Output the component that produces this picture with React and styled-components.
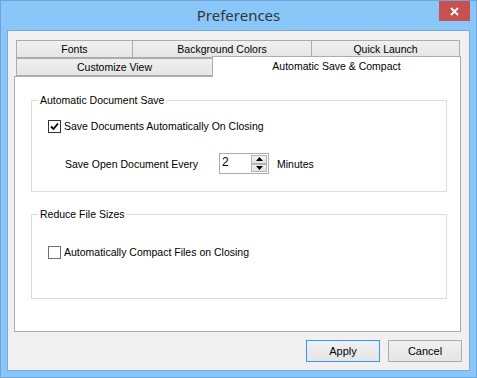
import React from 'react';
import styled, { createGlobalStyle } from 'styled-components';

const GlobalStyle = createGlobalStyle`
    html, body {
        margin: 0;
        padding: 0;
        background: #ffffff;
    }
    * {
        box-sizing: border-box;
    }
`;

const Frame = styled.div`
    width: 477px;
    height: 378px;
    border: 1px solid #6aa6dc;
    background: #8ac6f8;
    padding: 0 6px 6px;
    display: flex;
    flex-direction: column;
    font-family: "Liberation Sans", Arial, sans-serif;
    font-size: 10.5px;
    color: #000;
`;

const TitleBar = styled.div`
    position: relative;
    height: 29px;
    display: flex;
    align-items: center;
    justify-content: center;
    font-family: "Noto Sans", "Open Sans", sans-serif;
    font-size: 15px;
    color: #2f3640;
    padding-bottom: 1px;
`;

const CloseBtn = styled.div`
    position: absolute;
    top: 0;
    right: 0;
    width: 31px;
    height: 20px;
    background: #c75050;
    display: flex;
    align-items: center;
    justify-content: center;
`;

const Client = styled.div`
    flex: 1;
    border: 1px solid #74acdf;
    background: #f0f0f0;
    padding: 9px 0 8px 6px;
    display: flex;
    flex-direction: column;
`;

const TabControl = styled.div`
    width: 447px;
    flex: 1;
    display: flex;
    flex-direction: column;
`;

const TabRow = styled.div`
    height: 18px;
    display: flex;
    align-items: flex-end;
    padding-left: 2px;
`;

const Tab = styled.div`
    width: ${({w}) => w}px;
    height: ${({active}) => active ? 21 : 18}px;
    margin-left: -1px;
    margin-bottom: ${({active}) => active ? -1 : 0}px;
    &:first-child {
        margin-left: 0;
    }
    border: 1px solid #acacac;
    border-bottom: ${({active}) => active ? 'none' : '1px solid #acacac'};
    background: ${({active}) => active ? '#ffffff' : 'linear-gradient(#f0f0f0, #e5e5e5)'};
    position: relative;
    z-index: ${({active}) => active ? 1 : 0};
    display: flex;
    align-items: ${({active}) => active ? 'flex-start' : 'center'};
    padding-top: ${({active}) => active ? 2 : 0}px;
    justify-content: center;
    line-height: 14px;
    white-space: nowrap;
`;

const Panel = styled.div`
    flex: 1;
    border: 1px solid #acacac;
    background: #ffffff;
    padding: 23px 13px 0 16px;
    display: flex;
    flex-direction: column;
    gap: 22px;
`;

const Group = styled.div`
    position: relative;
    height: ${({h}) => h}px;
    border: 1px solid #dcdcdc;
    padding: ${({top}) => top}px 0 0 16px;
    display: flex;
    flex-direction: column;
    gap: 20px;
`;

const Legend = styled.div`
    position: absolute;
    top: -7px;
    left: 6px;
    padding: 0 2px;
    background: #ffffff;
    line-height: 13px;
`;

const CheckRow = styled.label`
    display: flex;
    align-items: center;
    gap: 3px;
    height: 13px;
    line-height: 13px;
`;

const Box = styled.span`
    width: 13px;
    height: 13px;
    border: 1px solid ${({checked}) => checked ? '#333333' : '#707070'};
    background: #ffffff;
    display: flex;
    align-items: center;
    justify-content: center;
`;

const SpinRow = styled.div`
    display: flex;
    align-items: center;
    height: 21px;
    padding-left: 17px;
`;

const SpinLabel = styled.span`
    width: 154px;
`;

const SpinBox = styled.div`
    width: 50px;
    height: 21px;
    border: 1px solid #abadb3;
    background: #ffffff;
    display: flex;
    align-items: stretch;
    padding: 0 1px 0 0;
`;

const SpinValue = styled.span`
    flex: 1;
    padding-left: 2px;
    font-size: 12px;
    line-height: 16px;
`;

const SpinButtons = styled.div`
    width: 16px;
    display: flex;
    flex-direction: column;
    padding: 1px 0;
`;

const SpinBtn = styled.div`
    flex: 1;
    border: 1px solid #b4b4b4;
    background: linear-gradient(#f2f2f2, #e2e2e2);
    display: flex;
    align-items: center;
    justify-content: center;
`;

const Unit = styled.span`
    margin-left: 8px;
`;

const ButtonBar = styled.div`
    margin-top: 8px;
    padding-right: 7px;
    display: flex;
    justify-content: flex-end;
    gap: 8px;
`;

const Button = styled.div`
    width: 74px;
    height: 22px;
    border: 1px solid ${({primary}) => primary ? '#3399ff' : '#acacac'};
    background: linear-gradient(#f0f0f0, #e5e5e5);
    display: flex;
    align-items: center;
    justify-content: center;
    font-size: 11px;
`;

const Arrow = ({up}) => (
    <svg width="7" height="4" viewBox="0 0 7 4">
        <polygon points={up ? '0,4 7,4 3.5,0' : '0,0 7,0 3.5,4'} fill="#000" />
    </svg>
);

const CheckBox = ({checked, children}) => (
    <CheckRow>
        <Box checked={checked}>
            {checked && (
                <svg width="9" height="9" viewBox="0 0 9 9">
                    <path d="M1 4.5 L3.5 7 L8 1.5" stroke="#000" strokeWidth="1.8" fill="none" />
                </svg>
            )}
        </Box>
        {children}
    </CheckRow>
);

export default function App() {
    return (
        <>
            <GlobalStyle />
            <Frame>
                <TitleBar>
                    Preferences
                    <CloseBtn>
                        <svg width="9" height="9" viewBox="0 0 9 9">
                            <path d="M1 1 L8 8 M8 1 L1 8" stroke="#fff" strokeWidth="1.8" />
                        </svg>
                    </CloseBtn>
                </TitleBar>
                <Client>
                    <TabControl>
                        <TabRow>
                            <Tab w={117}>Fonts</Tab>
                            <Tab w={180}>Background Colors</Tab>
                            <Tab w={149}>Quick Launch</Tab>
                        </TabRow>
                        <TabRow>
                            <Tab w={197}>Customize View</Tab>
                            <Tab w={249} active>Automatic Save &amp; Compact</Tab>
                        </TabRow>
                        <Panel>
                            <Group h={92} top={19}>
                                <Legend>Automatic Document Save</Legend>
                                <CheckBox checked>Save Documents Automatically On Closing</CheckBox>
                                <SpinRow>
                                    <SpinLabel>Save Open Document Every</SpinLabel>
                                    <SpinBox>
                                        <SpinValue>2</SpinValue>
                                        <SpinButtons>
                                            <SpinBtn><Arrow up /></SpinBtn>
                                            <SpinBtn><Arrow /></SpinBtn>
                                        </SpinButtons>
                                    </SpinBox>
                                    <Unit>Minutes</Unit>
                                </SpinRow>
                            </Group>
                            <Group h={85} top={31}>
                                <Legend>Reduce File Sizes</Legend>
                                <CheckBox>Automatically Compact Files on Closing</CheckBox>
                            </Group>
                        </Panel>
                    </TabControl>
                    <ButtonBar>
                        <Button primary>Apply</Button>
                        <Button>Cancel</Button>
                    </ButtonBar>
                </Client>
            </Frame>
        </>
    );
}
